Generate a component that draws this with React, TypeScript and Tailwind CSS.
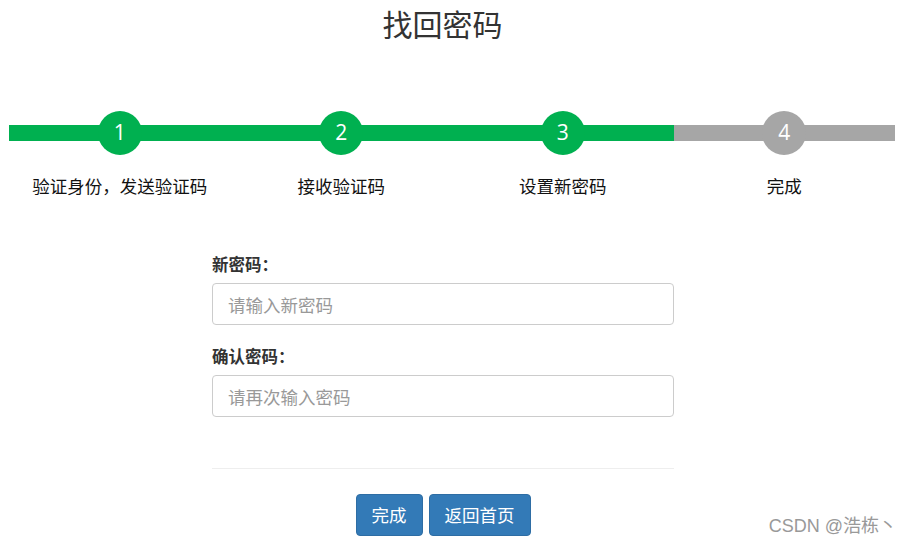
const steps = [
  { n: 1, label: "验证身份，发送验证码", done: true },
  { n: 2, label: "接收验证码", done: true },
  { n: 3, label: "设置新密码", done: true },
  { n: 4, label: "完成", done: false },
];

const cjk = "font-['Microsoft_YaHei','Noto_Sans_CJK_SC',sans-serif]";

export default function App() {
  return (
    <div className={`relative w-[907px] h-[544px] bg-white overflow-hidden ${cjk}`}>
      <h1 className="pt-[5px] pr-[22px] text-center text-[30px] leading-[36px] text-[#333]">找回密码</h1>

      {/* Steps */}
      <div className="mt-[70px] flex px-[9px] pr-[12px]">
        {steps.map((s) => (
          <div key={s.n} className="flex-1 flex flex-col items-center">
            <div className="relative w-full h-[44px] flex justify-center">
              <div
                className={`absolute left-0 right-0 top-[14px] h-[16px] ${s.done ? "bg-[#00b050]" : "bg-[#a6a6a6]"}`}
              />
              <div
                className={`relative w-[44px] h-[44px] rounded-full flex items-center justify-center text-white text-[21px] font-['Open_Sans',sans-serif] ${s.done ? "bg-[#00b050]" : "bg-[#a6a6a6]"}`}
              >
                {s.n}
              </div>
            </div>
            <div className="mt-[19px] text-[17.5px] leading-[24px] text-[#111] whitespace-nowrap">{s.label}</div>
          </div>
        ))}
      </div>

      {/* Form */}
      <div className="mt-[55px] w-[462px] ml-[212px]">
        <label className="block text-[16.5px] leading-[22px] font-bold text-[#333]">新密码：</label>
        <input
          type="password"
          placeholder="请输入新密码"
          className="mt-[8px] block w-full h-[42px] px-[15px] text-[17.5px] border border-[#ccc] rounded-[4px] outline-none placeholder:text-[#999]"
        />
        <label className="mt-[20px] block text-[16.5px] leading-[22px] font-bold text-[#333]">确认密码：</label>
        <input
          type="password"
          placeholder="请再次输入密码"
          className="mt-[8px] block w-full h-[42px] px-[15px] text-[17.5px] border border-[#ccc] rounded-[4px] outline-none placeholder:text-[#999]"
        />
        <div className="mt-[51px] border-t border-[#eee]" />
        <div className="mt-[25px] flex justify-center gap-[6px]">
          <button className="h-[42px] w-[67px] rounded-[4px] bg-[#337ab7] border border-[#2e6da4] text-white text-[17.5px]">
            完成
          </button>
          <button className="h-[42px] w-[102px] rounded-[4px] bg-[#337ab7] border border-[#2e6da4] text-white text-[17.5px]">
            返回首页
          </button>
        </div>
      </div>

      <div className="absolute right-[10px] bottom-[8px] text-[18px] leading-[20px] text-[#999] font-['Liberation_Sans','Noto_Sans_CJK_SC',sans-serif]">
        CSDN @浩栋丶
      </div>
    </div>
  );
}
